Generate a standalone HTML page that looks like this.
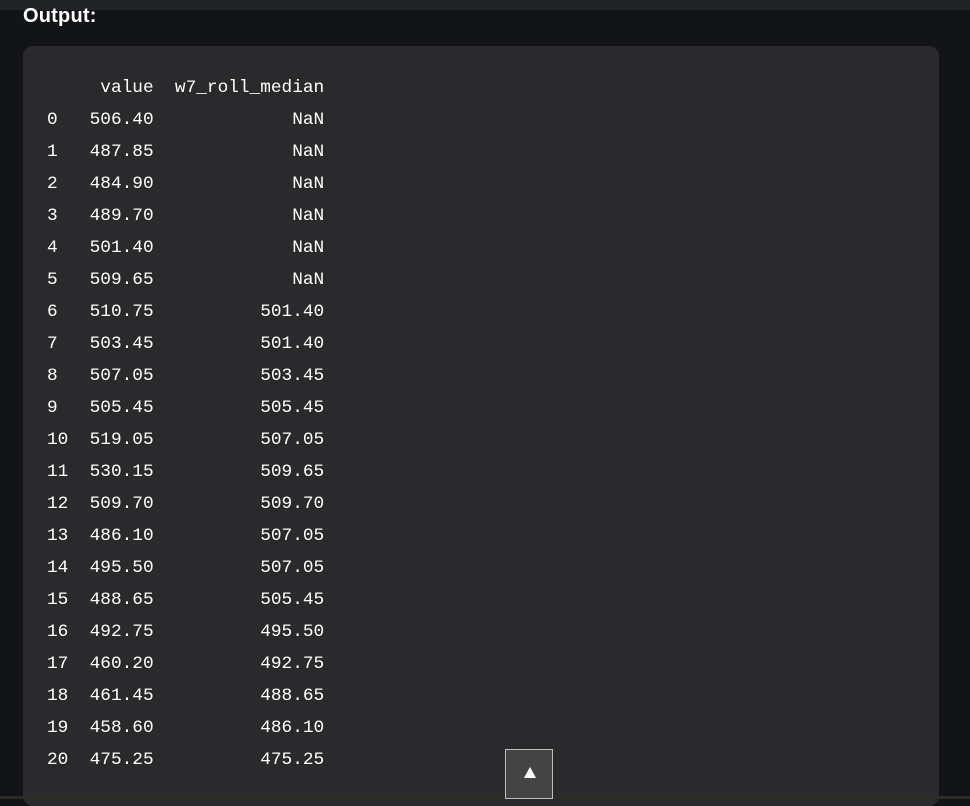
<!DOCTYPE html>
<html><head><style>
html,body{margin:0;padding:0;}
body{width:970px;height:799px;background:#131417;position:relative;overflow:hidden;}
.top{position:absolute;left:0;top:0;width:970px;height:10px;background:#222325;}
.h{position:absolute;left:23px;top:5px;color:#fff;font:bold 20px "Liberation Sans Narrow","Liberation Sans",sans-serif;letter-spacing:0.2px;}
.panel{position:absolute;left:23px;top:46px;width:916px;height:760px;background:#2a2a2c;border-radius:10px;}
pre{position:absolute;left:47px;top:72px;margin:0;color:#fff;font-family:"Liberation Mono","DejaVu Sans Mono",monospace;font-size:17.78px;line-height:32px;}
.btn{position:absolute;left:505px;top:749px;width:48px;height:50px;background:#444;border:1px solid #bdbdbd;box-sizing:border-box;}
.tri{position:absolute;left:18px;top:17px;width:0;height:0;border-left:6px solid transparent;border-right:6px solid transparent;border-bottom:11px solid #fff;}
.bot{position:absolute;left:0;top:796px;width:970px;height:3px;background:#2c2e24;}
</style></head><body>
<div class="top"></div>
<div class="h">Output:</div>
<div class="panel"></div>
<pre>     value  w7_roll_median
0   506.40             NaN
1   487.85             NaN
2   484.90             NaN
3   489.70             NaN
4   501.40             NaN
5   509.65             NaN
6   510.75          501.40
7   503.45          501.40
8   507.05          503.45
9   505.45          505.45
10  519.05          507.05
11  530.15          509.65
12  509.70          509.70
13  486.10          507.05
14  495.50          507.05
15  488.65          505.45
16  492.75          495.50
17  460.20          492.75
18  461.45          488.65
19  458.60          486.10
20  475.25          475.25</pre>
<div class="bot"></div>
<div class="btn"><div class="tri"></div></div>
</body></html>
